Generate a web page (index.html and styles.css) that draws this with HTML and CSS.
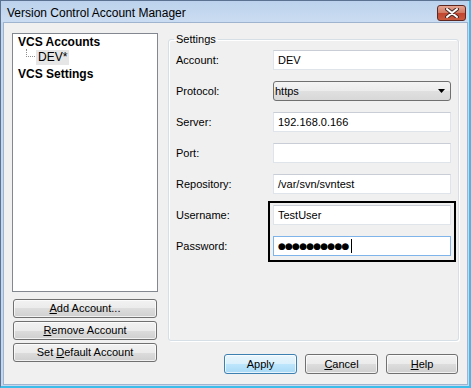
FILE: index.html
```html
<!DOCTYPE html>
<html lang="en">
<head>
<meta charset="UTF-8" />
<title>Version Control Account Manager</title>
<link rel="stylesheet" href="styles.css">
</head>
<body>

<div class="window">
  <div class="titlebar">
    <span class="title">Version Control Account Manager</span>
    <div class="close-btn">
      <svg width="14" height="10" viewBox="0 0 14 10">
        <path d="M2 1 L12 9 M12 1 L2 9" stroke="#4a2a26" stroke-width="4" stroke-linecap="round"/>
        <path d="M2 1 L12 9 M12 1 L2 9" stroke="#fff" stroke-width="2" stroke-linecap="round"/>
      </svg>
    </div>
  </div>

  <div class="client">
    <div class="left-col">
      <div class="tree">
        <div class="tree-row bold">VCS Accounts</div>
        <div class="tree-row child">
          <span class="tree-line"></span>
          <span class="tree-sel">DEV*</span>
        </div>
        <div class="tree-row bold">VCS Settings</div>
      </div>
      <div class="btn side-btn"><u>A</u>dd Account...</div>
      <div class="btn side-btn"><u>R</u>emove Account</div>
      <div class="btn side-btn">Set <u>D</u>efault Account</div>
    </div>

    <div class="right-col">
      <fieldset class="group">
        <legend>Settings</legend>
        <div class="form">
          <label>Account:</label>
          <div class="field">DEV</div>

          <label>Protocol:</label>
          <div class="field select">
            <span>https</span>
            <svg width="7" height="4" viewBox="0 0 7 4"><path d="M0 0 H7 L3.5 4 Z" fill="#000"/></svg>
          </div>

          <label>Server:</label>
          <div class="field">192.168.0.166</div>

          <label>Port:</label>
          <div class="field"></div>

          <label>Repository:</label>
          <div class="field">/var/svn/svntest</div>

          <label>Username:</label>
          <div class="field">TestUser</div>

          <label>Password:</label>
          <div class="field focused"><span class="dots">●●●●●●●●●●</span><span class="caret"></span></div>

          <div class="highlight"></div>
        </div>
      </fieldset>

      <div class="actions">
        <div class="btn default">Apply</div>
        <div class="btn"><u>C</u>ancel</div>
        <div class="btn"><u>H</u>elp</div>
      </div>
    </div>
  </div>
</div>

</body>
</html>
```

FILE: styles.css
```css
body { margin: 0; font-family: "Liberation Sans", Arial, sans-serif; font-size: 11px; color: #000; }

/* window frame */
.window {
  width: 471px; height: 388px; box-sizing: border-box;
  display: flex; flex-direction: column;
  background: #c4d7ee;
  border-top: 1px solid #5b7391; border-left: 1px solid #5b7391;
  border-right: 2px solid #3cbde9; border-bottom: 2px solid #3cbde9;
}
.titlebar {
  height: 21px; flex: none;
  display: flex; align-items: center; justify-content: space-between;
  padding: 0 3px 0 6px;
  background: linear-gradient(#bcd2ec, #cadcf1);
}
.title { font-size: 12px; padding-top: 3px; }
.close-btn {
  width: 27px; height: 14px; margin-top: 3px;
  display: flex; align-items: center; justify-content: center;
  border: 1px solid #5e2820; border-radius: 3px;
  background: linear-gradient(#e5a593, #d27a63 48%, #c2452f 52%, #c95a3f);
}

.client {
  flex: 1;
  display: flex; gap: 10px;
  margin: 0 1px 1px 2px;
  padding: 10px 8px;
  background: #f0f0f0;
  border: 1px solid #9fb4cf;
}

/* left side */
.left-col { width: 146px; display: flex; flex-direction: column; gap: 3px; padding-bottom: 12px; }
.tree {
  flex: 1; margin-bottom: 4px;
  background: #fff; border: 1px solid #828790;
}
.tree-row { height: 16px; line-height: 16px; padding-left: 5px; }
.tree-row.bold { font-weight: bold; font-size: 12px; }
.tree-row.child { display: flex; align-items: flex-start; padding-left: 13px; }
.tree-line {
  width: 8px; height: 7px; margin-top: -1px;
  border-left: 1px dotted #909090; border-bottom: 1px dotted #909090;
}
.tree-sel { margin-left: 1px; padding: 0 2px; background: #e6e6e6; line-height: 15px; font-size: 12px; }

/* buttons */
.btn {
  height: 20px; line-height: 18px; box-sizing: border-box;
  text-align: center;
  border: 1px solid #707070; border-radius: 3px;
  background: linear-gradient(#f2f2f2, #ebebeb 50%, #dddddd 50%, #cfcfcf);
  box-shadow: inset 0 0 0 1px rgba(255,255,255,0.7);
}
.side-btn { height: 19px; line-height: 17px; margin: 0 1px; }
.btn.default {
  border-color: #3c7fb1;
  background: linear-gradient(#eaf6fd, #d9f0fc 50%, #bee6fd 50%, #a7d9f5);
}

/* right side */
.right-col { flex: 1; display: flex; flex-direction: column; }
.group {
  flex: 1; margin: 0 0 13px 0; padding: 4px 7px 0;
  border: 1px solid #d5dfe5; border-radius: 3px;
  box-shadow: inset 1px 1px 0 #fff, 1px 1px 0 #fff;
}
.group legend { padding: 0 2px; margin-left: -2px; line-height: 13px; }

.form {
  position: relative;
  display: grid; grid-template-columns: 97px 178px;
  grid-auto-rows: 20px; row-gap: 11px;
  align-items: center;
}
.field {
  height: 20px; box-sizing: border-box;
  display: flex; align-items: center; padding-left: 4px;
  background: #fff;
  border: 1px solid #dfe3ea; border-top-color: #c9cdd6;
}
.field.select {
  justify-content: space-between; padding: 0 5px 0 1px;
  border: 1px solid #707070; border-radius: 3px;
  background: linear-gradient(#f4f4f4, #ececec 50%, #e0e0e0 50%, #d8d8d8);
}
.field.focused { border-color: #7eb4ea; }
.dots { font-family: "DejaVu Sans", sans-serif; font-size: 9px; letter-spacing: -0.8px; }
.caret { width: 1px; height: 14px; margin-left: 2px; background: #000; }

/* marker drawn over the credentials rows */
.highlight {
  position: absolute; left: 92px; top: 151px;
  width: 188px; height: 61px; box-sizing: border-box;
  border: 2px solid #000;
}

.actions { display: flex; justify-content: flex-end; gap: 8px; padding-right: 1px; }
.actions .btn { width: 73px; }
.actions .btn:last-child { width: 72px; }
```
